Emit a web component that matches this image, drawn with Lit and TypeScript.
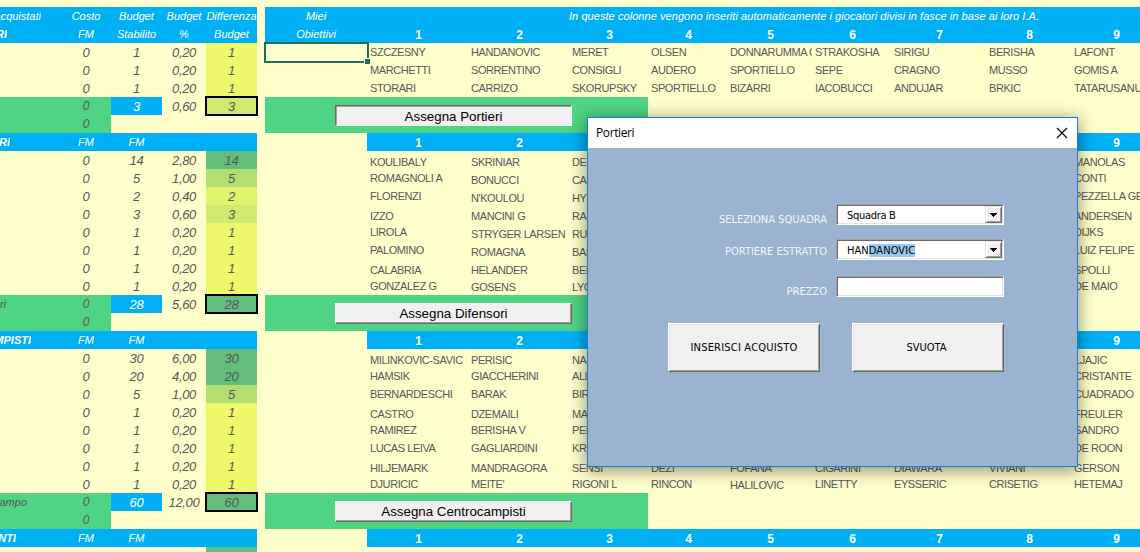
import { LitElement, html, css, svg, nothing } from "lit";
import { customElement, property } from "lit/decorators.js";
import { classMap } from "lit/directives/class-map.js";
import { styleMap } from "lit/directives/style-map.js";

type BudgetRow = [stabilito: string, percent: string, tone: string];

interface Block {
  title: string;
  titleEnd: number;
  total: string;
  totalEnd: number;
  rows: BudgetRow[];
  sum: BudgetRow;
}

const BLOCKS: Block[] = [
  {
    title: "PORTIERI", titleEnd: 7, total: "", totalEnd: 0,
    rows: [["1", "0,20", "t1"], ["1", "0,20", "t1"], ["1", "0,20", "t1"]],
    sum: ["3", "0,60", "t3"],
  },
  {
    title: "DIFENSORI", titleEnd: 10, total: "Totale Difensori", totalEnd: 6,
    rows: [["14", "2,80", "t9"], ["5", "1,00", "t5"], ["2", "0,40", "t2"], ["3", "0,60", "t3"],
      ["1", "0,20", "t1"], ["1", "0,20", "t1"], ["1", "0,20", "t1"], ["1", "0,20", "t1"]],
    sum: ["28", "5,60", "t9"],
  },
  {
    title: "CENTROCAMPISTI", titleEnd: 31, total: "Totale Centrocampo", totalEnd: 27,
    rows: [["30", "6,00", "t9"], ["20", "4,00", "t9"], ["5", "1,00", "t5"], ["1", "0,20", "t1"],
      ["1", "0,20", "t1"], ["1", "0,20", "t1"], ["1", "0,20", "t1"], ["1", "0,20", "t1"]],
    sum: ["60", "12,00", "t9"],
  },
];

interface Tier {
  button: string;
  pressed?: boolean;
  players: string[][];
  drops: number[][];
}

const same = (d: number) => Array(9).fill(d);
const mixed = (d: number) => [d, ...Array(7).fill(2), d];

const TIERS: Tier[] = [
  {
    button: "Assegna Portieri", pressed: true,
    players: [
      ["SZCZESNY", "HANDANOVIC", "MERET", "OLSEN", "DONNARUMMA G", "STRAKOSHA", "SIRIGU", "BERISHA", "LAFONT"],
      ["MARCHETTI", "SORRENTINO", "CONSIGLI", "AUDERO", "SPORTIELLO", "SEPE", "CRAGNO", "MUSSO", "GOMIS A"],
      ["STORARI", "CARRIZO", "SKORUPSKY", "SPORTIELLO", "BIZARRI", "IACOBUCCI", "ANDUJAR", "BRKIC", "TATARUSANU"],
    ],
    drops: [same(0), same(0), same(0)],
  },
  {
    button: "Assegna Difensori",
    players: [
      ["KOULIBALY", "SKRINIAR", "DE", "", "", "", "", "", "MANOLAS"],
      ["ROMAGNOLI A", "BONUCCI", "CAC", "", "", "", "", "", "CONTI"],
      ["FLORENZI", "N'KOULOU", "HYS", "", "", "", "", "", "PEZZELLA GER"],
      ["IZZO", "MANCINI G", "RAM", "", "", "", "", "", "ANDERSEN"],
      ["LIROLA", "STRYGER LARSEN", "RUG", "", "", "", "", "", "DIJKS"],
      ["PALOMINO", "ROMAGNA", "BAS", "", "", "", "", "", "LUIZ FELIPE"],
      ["CALABRIA", "HELANDER", "BER", "", "", "", "", "", "SPOLLI"],
      ["GONZALEZ G", "GOSENS", "LYC", "", "", "", "", "", "DE MAIO"],
    ],
    drops: [same(2), mixed(0), mixed(0), same(2), mixed(0), mixed(0), same(2), [0, 1, 1, 1, 1, 1, 1, 1, 0]],
  },
  {
    button: "Assegna Centrocampisti",
    players: [
      ["MILINKOVIC-SAVIC", "PERISIC", "NAI", "", "", "", "", "", "LJAJIC"],
      ["HAMSIK", "GIACCHERINI", "ALL", "", "", "", "", "", "CRISTANTE"],
      ["BERNARDESCHI", "BARAK", "BIRS", "", "", "", "", "", "CUADRADO"],
      ["CASTRO", "DZEMAILI", "MAT", "", "", "", "", "", "FREULER"],
      ["RAMIREZ", "BERISHA V", "PELL", "", "", "", "", "", "SANDRO"],
      ["LUCAS LEIVA", "GAGLIARDINI", "KRU", "", "", "", "", "", "DE ROON"],
      ["HILJEMARK", "MANDRAGORA", "SENSI", "DEZI", "FOFANA", "CIGARINI", "DIAWARA", "VIVIANI", "GERSON"],
      ["DJURICIC", "MEITE'", "RIGONI L", "RINCON", "HALILOVIC", "LINETTY", "EYSSERIC", "CRISETIG", "HETEMAJ"],
    ],
    drops: [same(2), same(0), same(0), same(2), same(0), same(0), same(2), [0, 0, 0, 0, 1, 0, 0, 0, 0]],
  },
];

const sheet = css`
  :host {
    display: block;
    font: 11px/18px "Liberation Sans", Arial, sans-serif;
    color: #58585a;
  }
  .row { display: grid; height: 18px; }
  .cell { height: 18px; overflow: hidden; white-space: nowrap; text-align: center; }
  .head { background: #00b0f4; color: #fff; font-style: italic; }
`;

@customElement("budget-sheet")
class BudgetSheet extends LitElement {
  static styles = [sheet, css`
    :host { width: 257px; font-style: italic; }
    .row { grid-template-columns: 61px 50px 51px 44px 51px; }
    .edge { display: flex; justify-content: flex-end; }
    .title { font-weight: bold; }
    .num { font-size: 13px; line-height: 20px; letter-spacing: -0.35px; }
    .small { font-size: 12px; }
    .band { background: #4fd483; }
    .blue { background: #00b0f4; color: #fff; }
    .t1 { background: #eff86b; }
    .t2 { background: #e1f26c; }
    .t3 { background: #d0ea6e; }
    .t5 { background: #b1df72; }
    .t9 { background: #63be7b; }
    .sum { outline: 2px solid #000; outline-offset: -1px; }
  `];

  private edge(text: string, end: number, extra = "") {
    return html`<div class="cell edge ${extra}" style=${styleMap({ width: `${end}px` })}>${text}</div>`;
  }

  private subhead(title: string, end: number) {
    return html`<div class="row head">
      ${this.edge(title, end, "title")}
      <div class="cell">FM</div><div class="cell">FM</div>
    </div>`;
  }

  private block(b: Block, i: number) {
    return html`
      ${i ? this.subhead(b.title, b.titleEnd) : nothing}
      ${b.rows.map(([s, p, t]) => html`<div class="row">
        <div></div>
        <div class="cell num">0</div><div class="cell num">${s}</div>
        <div class="cell num">${p}</div><div class="cell num ${t}">${s}</div>
      </div>`)}
      <div class="row">
        <div class="band">${this.edge(b.total, b.totalEnd)}</div>
        <div class="cell small band">0</div>
        <div class="cell num blue">${b.sum[0]}</div>
        <div class="cell num">${b.sum[1]}</div>
        <div class="cell num sum ${b.sum[2]}">${b.sum[0]}</div>
      </div>
      <div class="row"><div class="band"></div><div class="cell small band">0</div></div>`;
  }

  render() {
    return html`
      <div class="row head">
        ${this.edge("acquistati", 41)}
        <div class="cell">Costo</div><div class="cell">Budget</div>
        <div class="cell">Budget</div><div class="cell">Differenza</div>
      </div>
      <div class="row head">
        ${this.edge("PORTIERI", 7, "title")}
        <div class="cell">FM</div><div class="cell">Stabilito</div>
        <div class="cell">%</div><div class="cell">Budget</div>
      </div>
      ${BLOCKS.map((b, i) => this.block(b, i))}
      ${this.subhead("ATTACCANTI", 16)}
      <div class="row">
        <div></div><div class="cell num">0</div><div></div><div></div><div class="t9"></div>
      </div>`;
  }
}

@customElement("tier-sheet")
class TierSheet extends LitElement {
  static styles = [sheet, css`
    :host { width: 980px; }
    .row { grid-template-columns: 102px 101px 101px 79px 79px 85px 79px 95px 85px 89px 85px; }
    .tier {
      box-sizing: border-box; padding-left: 2px; background: #00b0f4; color: #fff;
      font-weight: bold; font-size: 12px; line-height: 20px;
    }
    .note { grid-column: 2 / -1; padding-left: 202px; text-align: left; letter-spacing: 0.06px; }
    .player { text-align: left; padding-left: 3px; box-sizing: border-box; letter-spacing: -0.42px; }
    .d1 { padding-top: 1px; }
    .d2 { padding-top: 2px; }
    .selected {
      position: relative; margin: -1px -2px -2px -1px; height: 21px; box-sizing: border-box;
      border: 2px solid #217346; box-shadow: inset 0 0 0 1px #fff;
    }
    .handle {
      position: absolute; right: -4px; bottom: -4px; width: 5px; height: 5px;
      background: #217346; border: 1px solid #fff;
    }
    .band { display: flex; height: 36px; width: 383px; background: #4fd483; }
    .assign {
      box-sizing: border-box; height: 21px; width: 237px; margin: 8px 0 0 70px; padding: 0;
      font: 13.33px/18px "Liberation Sans", Arial, sans-serif; color: #000; background: #f0f0f0;
      border: 1px solid; border-color: #fff #696969 #696969 #fff; box-shadow: inset -1px -1px #a0a0a0;
      text-align: center;
    }
    .pressed {
      padding-top: 2px; border-color: #696969 #fff #fff #696969; box-shadow: inset 1px 1px #a0a0a0;
    }
  `];

  private numbers(first: boolean) {
    return html`<div class="row">
      <div class=${classMap({ cell: true, head: first })}>${first ? "Obiettivi" : nothing}</div>
      ${[1, 2, 3, 4, 5, 6, 7, 8, 9].map((n) => html`<div class="cell tier">${n}</div>`)}
      <div class="tier"></div>
    </div>`;
  }

  render() {
    return html`
      <div class="row head">
        <div class="cell">Miei</div>
        <div class="cell note">In queste colonne vengono inseriti automaticamente i giocatori divisi in fasce in base ai loro I.A.</div>
      </div>
      ${TIERS.map((t, i) => html`
        ${this.numbers(i === 0)}
        ${t.players.map((names, r) => html`<div class="row">
          ${i === 0 && r === 0 ? html`<div class="selected"><div class="handle"></div></div>` : html`<div></div>`}
          ${names.map((n, c) => html`<div class="cell player d${t.drops[r][c]}">${n}</div>`)}
        </div>`)}
        <div class="band"><button class=${classMap({ assign: true, pressed: !!t.pressed })}>${t.button}</button></div>`)}
      ${this.numbers(false)}`;
  }
}

@customElement("combo-field")
class ComboField extends LitElement {
  @property() value = "";
  @property() hint = "";
  @property({ type: Boolean }) plain = false;

  static styles = css`
    :host { display: block; }
    .field {
      box-sizing: border-box; display: flex; width: 168px; height: 21px; background: #fff;
      border: 1px solid; border-color: #a0a0a0 #fff #fff #a0a0a0;
      box-shadow: inset 1px 1px #696969, inset -1px -1px #e3e3e3;
    }
    .text { flex: 1; padding-left: 10px; line-height: 21px; color: #000; white-space: pre; letter-spacing: -0.3px; }
    .wide { letter-spacing: 0.08px; }
    .hint { display: inline-block; height: 13px; line-height: 14px; background: #99c9ef; }
    .drop {
      box-sizing: border-box; width: 17px; height: 17px; margin: 1px; background: #f0f0f0;
      border: 1px solid; border-color: #e3e3e3 #696969 #696969 #e3e3e3;
      box-shadow: inset 1px 1px #fff, inset -1px -1px #a0a0a0;
    }
    .arrow { display: block; }
  `;

  render() {
    return html`<div class="field">
      <div class=${classMap({ text: true, wide: !!this.hint })}>${this.value}${this.hint ? html`<span class="hint">${this.hint}</span>` : nothing}</div>
      ${this.plain ? nothing : html`<div class="drop">
        <svg class="arrow" width="15" height="15" shape-rendering="crispEdges">${svg`<path d="M4 6h7v1h-1v1h-1v1h-1v1h-1v-1h-1v-1h-1v-1h-1z" fill="#000"/>`}</svg>
      </div>`}
    </div>`;
  }
}

@customElement("purchase-dialog")
class PurchaseDialog extends LitElement {
  static styles = css`
    :host {
      display: block; box-sizing: border-box; width: 491px; height: 350px;
      border: 1px solid #1b80d3; background: #99b3d1;
      box-shadow: 0 3px 16px 1px rgba(0, 0, 0, 0.42);
      font: 11px/14px "DejaVu Sans Condensed", "DejaVu Sans", sans-serif;
    }
    .bar {
      display: flex; align-items: center; justify-content: space-between; height: 30px;
      padding: 0 9px 0 8px; background: #fff; color: #000;
      font: 12px/30px "Open Sans", "Noto Sans", sans-serif; letter-spacing: -0.4px;
    }
    .form {
      display: grid; grid-template-columns: 239px 168px; column-gap: 9px;
      grid-template-rows: 21px 21px 21px; padding-top: 56px;
      row-gap: 14px;
    }
    .label { color: #f5f8fc; text-align: right; padding-top: 9px; white-space: nowrap; }
    .mid { padding-top: 6px; }
    .price { padding-top: 11px; }
    .last { padding-top: 2px; }
    .actions { display: flex; gap: 32px; padding: 28px 0 0 80px; }
    .action {
      box-sizing: border-box; width: 152px; height: 49px; padding: 0; font: inherit;
      letter-spacing: 0.2px; color: #000; background: #f0f0f0; border: 1px solid;
      border-color: #fff #696969 #696969 #fff;
      box-shadow: inset 1px 1px #e3e3e3, inset -1px -1px #a0a0a0;
    }
    .clear { letter-spacing: 0; padding-right: 3px; }
  `;

  render() {
    return html`
      <div class="bar">
        <span>Portieri</span>
        <svg width="12" height="12" viewBox="0 0 12 12"><path d="M1 1l10 10M11 1L1 11" stroke="#000" stroke-width="1.1" fill="none"/></svg>
      </div>
      <div class="form">
        <div class="label">SELEZIONA SQUADRA</div><combo-field value="Squadra B"></combo-field>
        <div class="label mid">PORTIERE ESTRATTO</div><combo-field value="HAN" hint="DANOVIC"></combo-field>
        <div class="label price">PREZZO</div><combo-field class="last" plain></combo-field>
      </div>
      <div class="actions">
        <button class="action">INSERISCI ACQUISTO</button>
        <button class="action clear">SVUOTA</button>
      </div>`;
  }
}

@customElement("app-root")
class AppRoot extends LitElement {
  static styles = css`
    :host { display: block; position: relative; width: 1140px; height: 552px; overflow: hidden; background: #ffffcc; }
    .sheets { display: flex; gap: 8px; padding-top: 7px; }
    .sheets > * { flex: none; }
    .dialog { position: absolute; left: 587px; top: 117px; }
  `;

  render() {
    return html`
      <div class="sheets"><budget-sheet></budget-sheet><tier-sheet></tier-sheet></div>
      <purchase-dialog class="dialog"></purchase-dialog>`;
  }
}
